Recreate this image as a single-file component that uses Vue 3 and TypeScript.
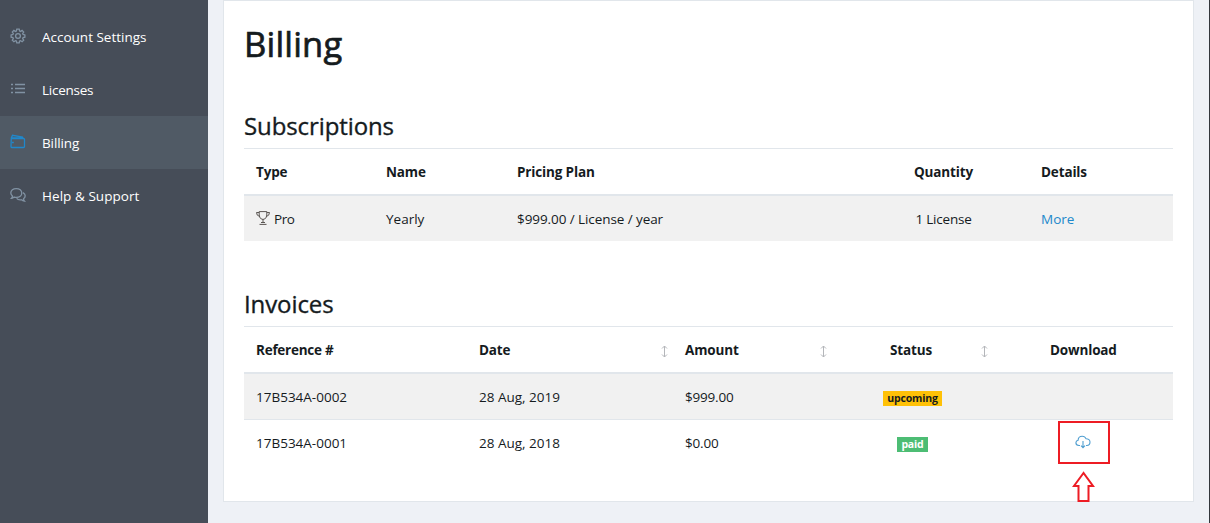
<script setup lang="ts">
interface NavItem { label: string; icon: string; active?: boolean }
const nav: NavItem[] = [
  { label: 'Account Settings', icon: 'gear' },
  { label: 'Licenses', icon: 'list' },
  { label: 'Billing', icon: 'wallet', active: true },
  { label: 'Help & Support', icon: 'chat' },
]
interface Invoice { ref: string; date: string; amount: string; status: 'upcoming' | 'paid'; download: boolean }
const invoices: Invoice[] = [
  { ref: '17B534A-0002', date: '28 Aug, 2019', amount: '$999.00', status: 'upcoming', download: false },
  { ref: '17B534A-0001', date: '28 Aug, 2018', amount: '$0.00', status: 'paid', download: true },
]
const headers = [
  { label: 'Reference #', cls: 'h-ref', sort: false },
  { label: 'Date', cls: 'h-date', sort: true },
  { label: 'Amount', cls: 'h-amount', sort: true },
  { label: 'Status', cls: 'h-status', sort: true },
  { label: 'Download', cls: 'h-download', sort: false },
]
</script>

<template>
  <div class="app">
    <nav class="sidebar">
      <a v-for="n in nav" :key="n.label" class="nav-item" :class="[n.icon, { active: n.active }]">
        <svg class="nav-icon" width="16" height="16" viewBox="0 0 16 16" fill="none" stroke="currentColor" stroke-width="1.3">
          <template v-if="n.icon === 'gear'">
            <circle cx="8" cy="8" r="2.4" />
            <path d="M6.8 1.2h2.4l.4 1.8 1 .4 1.5-1 1.6 1.6-1 1.5.4 1 1.800.4v2.300l-1.800.4-.4 1 1 1.500-1.600 1.600-1.500-1-1 .4-.4 1.800H6.800l-.4-1.800-1-.4-1.500 1-1.600-1.600 1-1.500-.4-1-1.800-.4V6.900l1.800-.4.4-1-1-1.500 1.600-1.600 1.500 1 1-.4z" />
          </template>
          <template v-else-if="n.icon === 'list'">
            <path d="M1 4.500h2M1 8.500h2M1 12.500h2M5 4.500h10M5 8.500h10M5 12.500h10" />
          </template>
          <template v-else-if="n.icon === 'wallet'">
            <path d="M2 5.500h11.500q1 0 1 1v7q0 1-1 1h-12q-.5 0-.5-1l.3-8.500 1.200-2.700 10 1.700.8 1.500M1.800 4.800l10 .2M2 9.500h1.800" />
          </template>
          <template v-else>
            <path d="M6.300 1.600c3.200 0 5.500 1.800 5.500 4.400s-2.300 4.400-5.500 4.400c-.8 0-1.500-.1-2.100-.3-.8.700-1.600 1.100-2.700 1.200.7-.7 1-1.400.9-2.200C1.400 8.200.8 7.200.8 6c0-2.600 2.300-4.400 5.500-4.400z" />
            <path d="M13 5.600c1.300.7 2.200 1.800 2.200 3.200 0 1.200-.6 2.200-1.600 2.900-.1.900.2 1.700.9 2.500-1.200-.2-2.100-.6-2.900-1.400-2 .4-3.900-.1-5-1.400" />
          </template>
        </svg>
        <span class="nav-label">{{ n.label }}</span>
      </a>
    </nav>
    <main class="main">
      <section class="card">
        <h1>Billing</h1>
        <h2>Subscriptions</h2>
        <div class="table subs">
          <div class="row head">
            <span>Type</span><span>Name</span><span>Pricing Plan</span><span>Quantity</span><span>Details</span>
          </div>
          <div class="row odd">
            <span class="pro">
              <svg class="trophy" width="14" height="14" viewBox="0 0 14 14" fill="none" stroke="currentColor" stroke-width="1">
                <path d="M3.200.6h7.600v3.400q0 3.300-2.800 4.300H6Q3.200 7.300 3.200 4zM3.200 1.500H.5q0 3.300 3.200 4M10.800 1.500h2.700q0 3.300-3.200 4M7 8.300v3.400M5 11.500h4M3.500 13.400h7" />
              </svg>
              <span>Pro</span>
            </span>
            <span>Yearly</span><span class="plan">$999.00 / License / year</span><span class="qty">1 License</span><a class="more">More</a>
          </div>
        </div>
        <h2 class="inv-title">Invoices</h2>
        <div class="table inv">
          <div class="row head">
            <div v-for="h in headers" :key="h.label" class="th" :class="h.cls">
              <span class="th-label">{{ h.label }}</span>
              <svg v-if="h.sort" class="sort" width="7" height="13" viewBox="0 0 7 13" fill="none" stroke="currentColor">
                <path d="M3.500 1v11M1 3.500 3.500 1 6 3.500M1 9.500 3.500 12 6 9.500" />
              </svg>
            </div>
          </div>
          <div v-for="(i, k) in invoices" :key="i.ref" class="row" :class="{ odd: k === 0, next: k > 0 }">
            <span class="ref">{{ i.ref }}</span>
            <span class="date">{{ i.date }}</span>
            <span class="amount">{{ i.amount }}</span>
            <span class="status"><b class="badge" :class="i.status">{{ i.status }}</b></span>
            <span class="download">
              <template v-if="i.download">
                <svg class="cloud" width="16" height="14" viewBox="0 0 16 14" fill="none" stroke="currentColor" stroke-width="1.1">
                  <path d="M5 10.500H4C2 10.500.9 9.400.9 7.800c0-1.400.9-2.300 2.200-2.600C3.200 2.700 5 1.200 7.200 1.200c1.900 0 3.200 1 3.900 2.600 2.300 0 3.900 1.300 3.900 3.300 0 2.100-1.300 3.400-3.200 3.400H11M8 6v6.500M6 10.700l2 2 2-2" />
                </svg>
                <span class="callout">
                  <svg class="arrow" width="23" height="31" viewBox="0 0 23 31" fill="#fff" stroke="#ed1c24" stroke-width="2">
                    <path d="M11.500 2 2 15h4.500v15h10V15H21z" />
                  </svg>
                </span>
              </template>
            </span>
          </div>
        </div>
      </section>
    </main>
  </div>
</template>

<style>
html, body { margin: 0; overflow: hidden; background: #eef1f6; }
</style>
<style scoped>
* { box-sizing: border-box; }
.app { display: flex; width: 100vw; height: 100vh; font-family: "Open Sans", "Noto Sans", sans-serif; font-size: 13.5px; line-height: 20px; color: #151b1e; background: #eef1f6; border-right: 1px solid #32363b; white-space: nowrap; }
.sidebar { width: 208px; flex: none; background: #464d58; padding-top: 10px; }
.nav-item { height: 53px; display: flex; align-items: center; padding-left: 10px; gap: 16px; color: #fff; }
.nav-item.active { background: #505a65; }
.nav-icon { color: #8192a3; flex: none; margin-bottom: 1px; }
.active .nav-icon, .list .nav-icon { margin-bottom: 3px; }
.active .nav-icon { color: #2088cb; }
.nav-label { letter-spacing: 0; }
.list .nav-label { letter-spacing: -.25px; }
.active .nav-label { letter-spacing: -.1px; }
.chat .nav-label { letter-spacing: .05px; }
.main { flex: 1; padding-left: 15px; }
.card { width: 971px; height: 502px; background: #fff; border: 1px solid #e1e6eb; padding: 0 20px; }
h1, h2 { margin: 0; font-weight: 500; }
h1 { font-size: 34.5px; line-height: 42px; padding-top: 22px; height: 103px; letter-spacing: .2px; -webkit-text-stroke: .7px currentColor; }
h2 { font-size: 24px; line-height: 30px; height: 44px; padding-top: 7px; letter-spacing: -.1px; -webkit-text-stroke: .35px currentColor; }
.inv-title { margin-top: 41px; }
.row { display: grid; height: 45px; align-items: center; }
.head { height: 48px; border-top: 1px solid #e1e6eb; border-bottom: 2px solid #e1e6eb; font-weight: 700; letter-spacing: -.15px; }
.odd { background: #f1f1f1; }
.next { height: 47px; border-top: 1px solid #e1e6eb; }
.subs .row { grid-template-columns: 130px 131px 380px 144px 1fr; padding-left: 12px; }
.subs .row > :nth-child(4) { text-align: center; padding-right: 51px; }
.subs .plan { letter-spacing: -.08px; }
.subs .row > .qty { letter-spacing: -.2px; }
.inv .row { grid-template-columns: 223px 206px 161px 161px 1fr; padding-left: 12px; }
.pro { display: flex; align-items: center; gap: 4px; letter-spacing: -.4px; }
.trophy { color: #5b5653; margin-bottom: 2px; }
.more { color: #2088cb; }
.th { display: flex; align-items: center; justify-content: space-between; }
.h-ref { letter-spacing: -.25px; }
.sort { color: #b4b6ba; margin-right: 17px; margin-top: 3px; }
.h-amount .sort, .h-status .sort { margin-right: 19px; }
.h-status .th-label { padding-left: 44px; }
.h-download { padding-left: 43px; }
.amount { letter-spacing: -.2px; }
.status { display: flex; justify-content: center; padding-right: 28px; }
.badge { height: 15px; padding: 0 4px; font-size: 10.5px; line-height: 15px; margin-top: 3px; letter-spacing: -.15px; }
.upcoming { background: #ffc107; }
.paid { background: #4dbd74; color: #fff; }
.download { position: relative; display: block; height: 46px; }
.cloud { position: absolute; left: 68px; top: 15px; color: #4f9ed0; }
.callout { position: absolute; left: 51px; top: 1px; width: 52px; height: 43px; border: 2px solid #ed1c24; }
.arrow { position: absolute; left: 12px; top: 48px; }
</style>
